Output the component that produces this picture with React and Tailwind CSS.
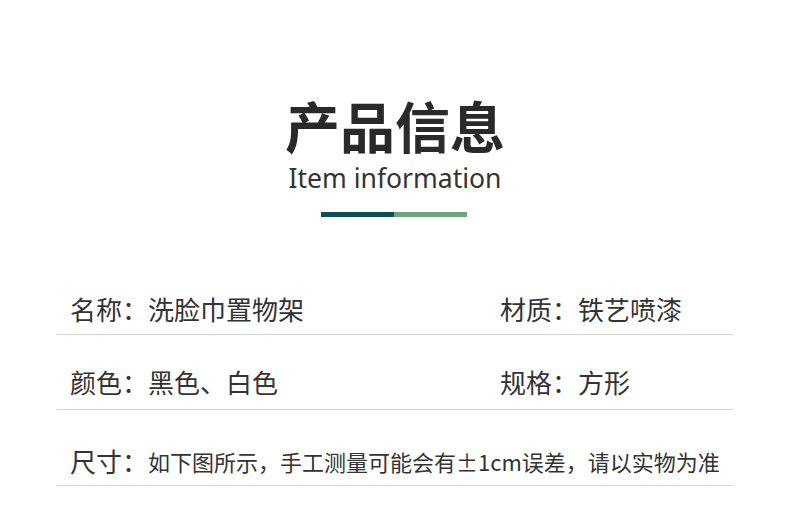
export default function App() {
  const cjk = { fontFamily: '"Noto Sans CJK SC", "Noto Sans", sans-serif' };
  return (
    <div className="w-[790px] h-[512px] bg-white text-[#333333] overflow-hidden" style={cjk}>
      <div className="flex flex-col items-center pt-[93px]">
        <div className="text-[55px] leading-[62px] font-bold text-[#2a2a2a]">产品信息</div>
        <div className="text-[26.5px] leading-[32px] text-[#333333] mt-[7px]" style={{ fontFamily: '"Noto Sans", sans-serif' }}>Item information</div>
        <div className="flex mt-[18px] mr-[3px]">
          <div className="w-[73px] h-[5px] bg-[#0b4f5c]"></div>
          <div className="w-[73px] h-[5px] bg-[#6aa878]"></div>
        </div>
      </div>
      <div className="mx-[57px] mt-[43px]">
        <div className="grid grid-cols-[430px_1fr] h-[75px] items-end pb-[11px] border-b border-[#d4d4d4] text-[26px] leading-[28px]">
          <div className="pl-[13px]">名称：洗脸巾置物架</div>
          <div className="pl-[13px]">材质：铁艺喷漆</div>
        </div>
        <div className="grid grid-cols-[430px_1fr] h-[75px] items-end pb-[13px] border-b border-[#d4d4d4] text-[26px] leading-[28px]">
          <div className="pl-[13px]">颜色：黑色、白色</div>
          <div className="pl-[13px]">规格：方形</div>
        </div>
        <div className="flex items-end h-[76px] pb-[10px] border-b border-[#d4d4d4] pl-[13px]">
          <span className="text-[26px] leading-[28px]">尺寸：</span>
          <span className="text-[22px] leading-[28px]">如下图所示，手工测量可能会有±1cm误差，请以实物为准</span>
        </div>
      </div>
    </div>
  );
}
